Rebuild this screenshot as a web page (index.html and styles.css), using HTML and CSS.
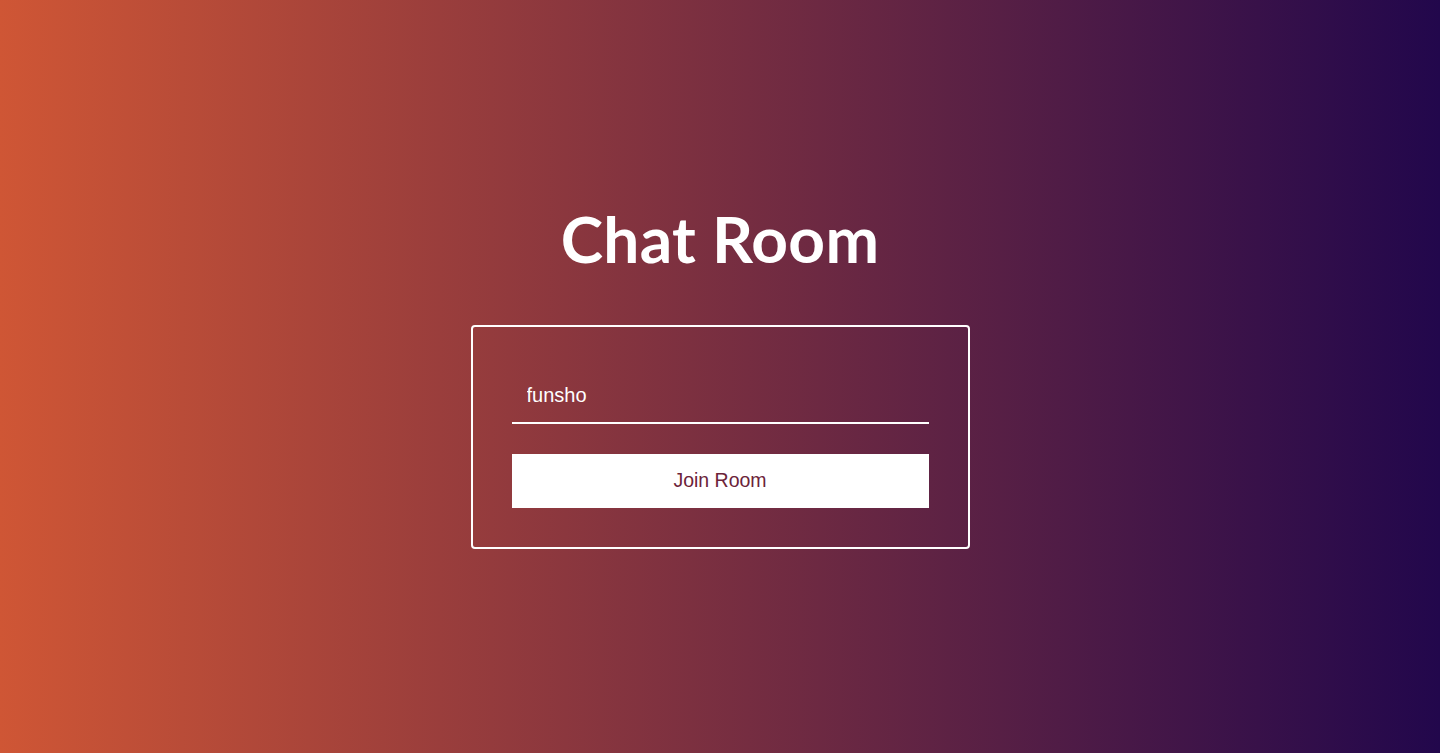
FILE: index.html
```html
<!DOCTYPE html>
<html lang="en">
<head>
<meta charset="utf-8">
<title>Chat Room</title>
<link rel="stylesheet" href="styles.css">
</head>
<body>
<main class="page">
  <h1 class="title">Chat Room</h1>
  <form class="card">
    <input class="name-input" type="text" value="funsho">
    <button class="join-btn" type="button">Join Room</button>
  </form>
</main>
</body>
</html>
```
FILE: styles.css
```css
html, body {
  margin: 0;
  padding: 0;
  height: 100%;
}
body {
  background: linear-gradient(to right, #cf5635 0%, #22074c 100%);
  font-family: "Liberation Sans", Arial, sans-serif;
}
.page {
  height: 100%;
  display: flex;
  flex-direction: column;
  align-items: center;
  justify-content: center;
}
.title {
  margin: 0 0 52px 0;
  color: #fff;
  font-family: Lato, "Open Sans", sans-serif;
  font-weight: 700;
  font-size: 64px;
  line-height: 68px;
  letter-spacing: 0.3px;
}
.card {
  box-sizing: border-box;
  width: 499px;
  border: 2px solid #fff;
  border-radius: 4px;
  padding: 39px 39px 39px 39px;
  display: flex;
  flex-direction: column;
  gap: 30px;
}
.name-input {
  box-sizing: border-box;
  width: 417px;
  height: 58px;
  background: transparent;
  border: none;
  border-bottom: 2px solid #fff;
  outline: none;
  color: #fff;
  font-family: "Liberation Sans", Arial, sans-serif;
  font-size: 20px;
  padding: 4px 15px 0;
}
.join-btn {
  height: 54px;
  width: 417px;
  background: #fff;
  border: none;
  color: #6c2339;
  font-family: "Liberation Sans", Arial, sans-serif;
  font-size: 19.5px;
  padding: 0;
  cursor: pointer;
}
```
